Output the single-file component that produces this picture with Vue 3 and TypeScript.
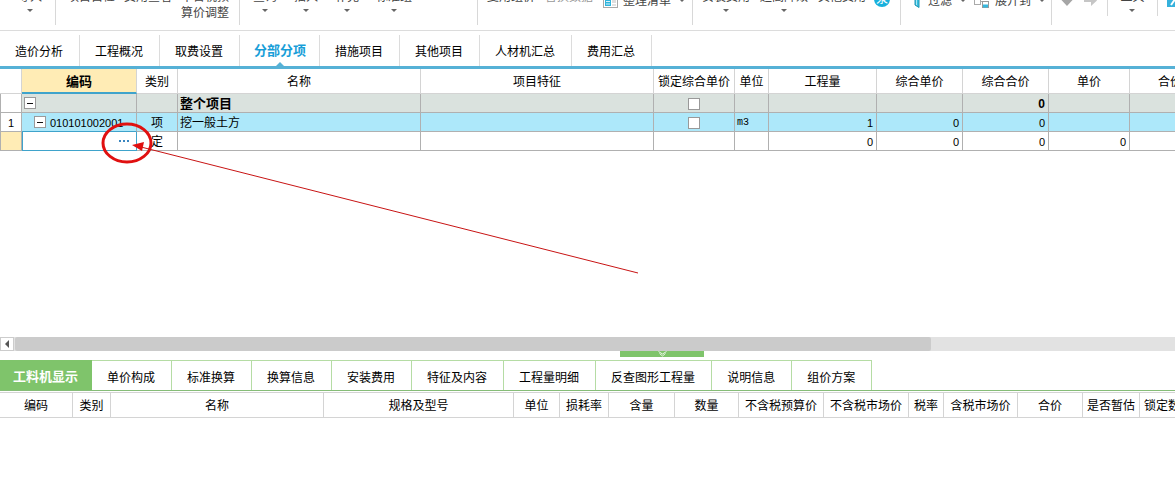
<script setup lang="ts">
import { ref } from 'vue'

interface Tool {
  label: string
  second?: string
  arrow?: boolean
  dim?: boolean
}

interface Row {
  index: string
  kind: 'total' | 'item' | 'quota'
  code: string
  type: string
  name: string
  lock: boolean
  unit: string
  quantity: string
  unitPrice: string
  totalPrice: string
  price: string
}

const checkTools: Tool[] = [
  { label: '项目自检' },
  { label: '费用查看' },
  { label: '不含税预', second: '算价调整' },
]
const editTools: Tool[] = [
  { label: '查询', arrow: true },
  { label: '插入', arrow: true },
  { label: '补充', arrow: true },
  { label: '标准组', arrow: true },
]
const reuseTools: Tool[] = [{ label: '复用组价' }, { label: '替换数据', dim: true }]
const priceTools: Tool[] = [
  { label: '安装费用', arrow: true },
  { label: '超高降效', arrow: true },
  { label: '其他费用' },
]

const mainTabs = ['造价分析', '工程概况', '取费设置', '分部分项', '措施项目', '其他项目', '人材机汇总', '费用汇总']
const activeMain = ref('分部分项')

const detailTabs = [
  '工料机显示', '单价构成', '标准换算', '换算信息', '安装费用',
  '特征及内容', '工程量明细', '反查图形工程量', '说明信息', '组价方案',
]
const activeDetail = ref('工料机显示')

const columns = ['编码', '类别', '名称', '项目特征', '锁定综合单价', '单位', '工程量', '综合单价', '综合合价', '单价', '合价']
const detailColumns = [
  '编码', '类别', '名称', '规格及型号', '单位', '损耗率', '含量', '数量',
  '不含税预算价', '不含税市场价', '税率', '含税市场价', '合价', '是否暂估', '锁定数量',
]

const rows: Row[] = [
  { index: '', kind: 'total', code: '', type: '', name: '整个项目', lock: true, unit: '', quantity: '', unitPrice: '', totalPrice: '0', price: '' },
  { index: '1', kind: 'item', code: '010101002001', type: '项', name: '挖一般土方', lock: true, unit: 'm3', quantity: '1', unitPrice: '0', totalPrice: '0', price: '' },
  { index: '', kind: 'quota', code: '', type: '定', name: '', lock: false, unit: '', quantity: '0', unitPrice: '0', totalPrice: '0', price: '0' },
]
</script>

<template>
  <div class="app">
    <header class="ribbon">
      <div class="group g-import">
        <button class="tool"><span>导入</span><i class="caret"></i></button>
      </div>
      <div class="group g-check">
        <button v-for="t in checkTools" :key="t.label" class="tool">
          <span>{{ t.label }}</span><span v-if="t.second" class="second">{{ t.second }}</span>
        </button>
      </div>
      <div class="group g-edit">
        <button v-for="t in editTools" :key="t.label" class="tool">
          <span>{{ t.label }}</span><i v-if="t.arrow" class="caret"></i>
        </button>
      </div>
      <div class="group g-reuse">
        <button v-for="t in reuseTools" :key="t.label" class="tool" :class="{ dim: t.dim }"><span>{{ t.label }}</span></button>
        <button class="tool-row">
          <svg width="15" height="14" viewBox="0 0 15 14">
            <rect x="0.5" y="0.5" width="14" height="13" fill="#fff" stroke="#a9a9a9" />
            <rect x="2" y="2" width="6" height="10" fill="#2fb4dc" />
            <path d="M3 7.5h4M3 10h4" stroke="#d9f2fa" />
            <rect x="9" y="2" width="4" height="7" fill="#dedede" />
            <path d="M9 11h4" stroke="#c4c4c4" />
          </svg>
          <span>整理清单</span><i class="caret"></i>
        </button>
      </div>
      <div class="group g-price">
        <button v-for="t in priceTools" :key="t.label" class="tool">
          <span>{{ t.label }}</span><i v-if="t.arrow" class="caret"></i>
        </button>
        <span class="badge">泵</span>
      </div>
      <div class="group g-filter">
        <button class="tool-row">
          <svg width="12" height="14" viewBox="0 0 12 14">
            <path d="M0.5 0.5h11L8 5v8.5L4 11V5z" fill="#35bfe0" stroke="#2295b5" />
            <path d="M5.5 5v6" stroke="#a8e8f6" />
          </svg>
          <span>过滤</span><i class="caret"></i>
        </button>
        <button class="tool-row">
          <svg width="16" height="14" viewBox="0 0 16 14">
            <rect x="0.5" y="4.5" width="6" height="6" fill="#fff" stroke="#aaa" />
            <path d="M6 7.5h3" stroke="#aaa" />
            <rect x="8.5" y="0.5" width="6" height="5" fill="#fff" stroke="#999" />
            <rect x="8.5" y="7.5" width="6" height="6" fill="#fff" stroke="#999" />
            <path d="M9 10.5h5v3H9z" fill="#35b8de" />
          </svg>
          <span>展开到</span><i class="caret"></i>
        </button>
      </div>
      <div class="group short g-move">
        <button class="icon-button" aria-label="下移">
          <svg width="14" height="12" viewBox="0 0 14 12"><path d="M4 0h6v5h3.5L7 12 0.5 5H4z" fill="#a6a6a6" /></svg>
        </button>
        <button class="icon-button" aria-label="右移">
          <svg width="14" height="12" viewBox="0 0 14 12"><path d="M0 5h7V0l6 6.5L7 12V8H0z" fill="#c6c6c6" /></svg>
        </button>
      </div>
      <div class="group short g-tool">
        <button class="tool"><span>工具</span><i class="caret"></i></button>
      </div>
      <div class="group g-last">
        <svg width="16" height="14" viewBox="0 0 16 14"><rect width="16" height="14" fill="#35b1dc" /><path d="M4 12l5-7" stroke="#fff" stroke-width="2" /></svg>
      </div>
    </header>

    <nav class="main-tabs">
      <button v-for="t in mainTabs" :key="t" :class="{ active: t === activeMain }" @click="activeMain = t">{{ t }}</button>
    </nav>

    <main class="pane">
      <table class="grid">
        <colgroup>
          <col class="w22" /><col class="w115" /><col class="w41" /><col class="w243" /><col class="w233" /><col class="w81" />
          <col class="w34" /><col class="w108" /><col class="w86" /><col class="w86" /><col class="w81" /><col class="w81" />
        </colgroup>
        <thead>
          <tr>
            <th></th>
            <th v-for="(c, i) in columns" :key="c" :class="{ current: i === 0 }">{{ c }}</th>
          </tr>
        </thead>
        <tbody>
          <tr v-for="(r, i) in rows" :key="i" :class="r.kind">
            <td class="index">{{ r.index }}</td>
            <td class="code">
              <div v-if="r.kind !== 'quota'" class="node">
                <button class="toggle" aria-label="折叠"></button><span>{{ r.code }}</span>
              </div>
              <button v-else class="more" aria-label="选择编码"><i></i><i></i><i></i></button>
            </td>
            <td class="center">{{ r.type }}</td>
            <td class="name">{{ r.name }}</td>
            <td></td>
            <td class="center"><input v-if="r.lock" type="checkbox" :aria-label="'锁定综合单价 ' + r.name" /></td>
            <td class="unit">{{ r.unit }}</td>
            <td class="num">{{ r.quantity }}</td>
            <td class="num">{{ r.unitPrice }}</td>
            <td class="num">{{ r.totalPrice }}</td>
            <td class="num">{{ r.price }}</td>
            <td></td>
          </tr>
        </tbody>
      </table>
      <svg class="annotation" width="660" height="230" viewBox="0 0 660 230">
        <ellipse cx="127" cy="74" rx="24" ry="19" fill="none" stroke="#e01010" stroke-width="3" />
        <path d="M141 78L638 204" stroke="#c81414" stroke-width="1" />
        <path d="M132 76L144 73L142 82z" fill="#e01010" />
      </svg>
    </main>

    <div class="scrollbar">
      <button class="scroll-left" aria-label="向左滚动"></button>
      <div class="track"><div class="thumb"></div></div>
    </div>

    <section class="detail">
      <button class="splitter" aria-label="收起">
        <svg width="11" height="6" viewBox="0 0 11 6" fill="none" stroke="#e9f6e4"><path d="M1.5 0.5L5.5 3L9.5 0.5M2.5 2.5L5.5 5L8.5 2.5" /></svg>
      </button>
      <nav class="detail-tabs">
        <button v-for="t in detailTabs" :key="t" :class="{ active: t === activeDetail }" @click="activeDetail = t">{{ t }}</button>
      </nav>
      <table class="grid detail-grid">
        <colgroup>
          <col class="w73" /><col class="w38" /><col class="w213" /><col class="w190" /><col class="w46" /><col class="w49" />
          <col class="w66" /><col class="w64" /><col class="w85" /><col class="w85" /><col class="w35" /><col class="w74" />
          <col class="w65" /><col class="w57" /><col class="w57" />
        </colgroup>
        <thead>
          <tr><th v-for="c in detailColumns" :key="c">{{ c }}</th></tr>
        </thead>
      </table>
    </section>
  </div>
</template>

<style>
body {
  margin: 0;
  background: #fff;
}
</style>

<style scoped>
.app {
  display: flex;
  flex-direction: column;
  min-height: 100vh;
  overflow: hidden;
  font-family: "Liberation Sans", "Noto Sans CJK SC", sans-serif;
  font-size: 12px;
  line-height: 16px;
  color: #000;
}
button {
  margin: 0;
  padding: 0;
  border: 0;
  background: none;
  font: inherit;
  color: inherit;
  white-space: nowrap;
}

.ribbon {
  display: flex;
  align-items: flex-start;
  height: 30px;
  overflow: hidden;
  border-bottom: 1px solid #dcdcdc;
  color: #444;
}
.group {
  display: flex;
  flex: none;
  box-sizing: border-box;
  height: 25px;
  border-right: 1px solid #d8d8d8;
}
.group.short { height: 16px; }
.g-import { width: 56px; padding-left: 18px; }
.g-check { width: 184px; padding-left: 11px; gap: 9px; }
.g-edit { width: 238px; padding-left: 13px; gap: 17px; }
.g-reuse { width: 215px; padding-left: 9px; gap: 10px; }
.g-price { width: 208px; padding-left: 9px; gap: 10px; }
.g-filter { width: 151px; padding-left: 10px; gap: 8px; }
.g-move { width: 56px; padding-left: 8px; gap: 10px; }
.g-tool { width: 50px; justify-content: center; }
.g-last { flex: 1 0 auto; padding-left: 9px; border-right: 0; }
.g-last svg { margin-top: -7px; }
.tool {
  display: flex;
  flex-direction: column;
  align-items: center;
  align-self: flex-start;
  margin-top: -11px;
}
.tool .caret { margin-top: 4px; }
.tool.dim { color: #999; }
.caret {
  width: 0;
  height: 0;
  border: 3px solid transparent;
  border-top-color: #666;
  border-bottom: 0;
}
.tool-row {
  display: flex;
  align-items: center;
  align-self: flex-start;
  gap: 5px;
  margin-top: -7px;
}
.tool-row .caret {
  align-self: flex-start;
  margin-top: 6px;
  margin-left: 3px;
}
.badge {
  width: 16px;
  height: 16px;
  margin-top: -9px;
  margin-left: -2px;
  border-radius: 50%;
  background: #18b0dc;
  color: #fff;
  text-align: center;
}
.icon-button {
  display: flex;
  align-self: flex-start;
  margin-top: -6px;
}

.main-tabs {
  display: flex;
  height: 31px;
  padding-top: 4px;
  border-bottom: 3px solid #56b1d6;
}
.main-tabs button {
  position: relative;
  padding: 2px 16px 0 15px;
  border-right: 1px solid #dcdcdc;
}
.main-tabs .active {
  padding: 0 13px 0 14px;
  font-size: 13px;
  font-weight: bold;
  color: #189ed8;
}
.main-tabs .active::after {
  content: "";
  position: absolute;
  left: 50%;
  bottom: 0;
  margin-left: -4px;
  border: 4px solid transparent;
  border-top: 0;
  border-bottom-color: #56b1d6;
}

.pane {
  position: relative;
  flex: 1;
  overflow: hidden;
}
.grid {
  width: 0;
  table-layout: fixed;
  border-collapse: separate;
  border-spacing: 0;
}
.grid th,
.grid td {
  box-sizing: border-box;
  padding: 0;
  border-right: 1px solid #b0b0b0;
  border-bottom: 1px solid #b0b0b0;
  font-weight: normal;
  white-space: nowrap;
}
.grid th {
  height: 25px;
  padding-top: 2px;
  border-color: #d4d4d4;
}
.grid td {
  height: 19px;
  padding-top: 2px;
  line-height: 16px;
}
.grid th.current {
  border-bottom: 2px solid #3fa3cb;
  background: #ffecb5;
  font-size: 13px;
  font-weight: bold;
}
.total td { background: #dae2de; font-weight: bold; }
.item td { background: #ade8fa; }
.grid .index {
  border-left: 1px solid #b0b0b0;
  background: #fff;
  text-align: center;
  font-size: 11px;
}
.quota .index { background: #ffecb5; }
.center { text-align: center; }
.grid .name { padding-left: 2px; }
.total .name { font-size: 13px; }
.grid .unit {
  padding-left: 2px;
  font-family: "Liberation Mono", monospace;
  font-size: 10px;
}
.grid .num {
  padding-right: 3px;
  text-align: right;
  font-size: 11px;
}
.grid .total .num { font-size: 12px; }
.grid .code { padding-top: 0; }
.node {
  display: flex;
  align-items: center;
  gap: 4px;
  height: 18px;
  padding-left: 2px;
  font-size: 11px;
}
.node span { padding-top: 2px; }
.item .node { padding-left: 12px; }
.item .code,
.quota .code { border-color: #3fa3cb; }
.item .code { border-right-color: #b0b0b0; }
.quota .code { border-left: 1px solid #3fa3cb; }
.toggle {
  display: flex;
  align-items: center;
  box-sizing: border-box;
  width: 12px;
  height: 12px;
  border: 1px solid #9a9a9a;
  background: #fff;
}
.toggle::before {
  content: "";
  width: 6px;
  height: 1px;
  margin-left: 2px;
  background: #111;
}
.more {
  display: flex;
  gap: 2px;
  margin-left: auto;
  margin-right: 7px;
}
.more i {
  width: 2px;
  height: 2px;
  background: #3a86c0;
}
input {
  display: block;
  appearance: none;
  box-sizing: border-box;
  width: 12px;
  height: 12px;
  margin: 0 auto 1px;
  border: 1px solid #999;
  background: #fff;
}
.annotation {
  position: absolute;
  left: 0;
  top: 0;
  pointer-events: none;
}

.scrollbar {
  display: flex;
  gap: 1px;
  height: 14px;
  background: #e2e2e2;
}
.scroll-left {
  display: flex;
  align-items: center;
  justify-content: center;
  box-sizing: border-box;
  width: 14px;
  border: 1px solid #ccc;
  background: #fff;
}
.scroll-left::before {
  content: "";
  border: 4px solid transparent;
  border-left: 0;
  border-right-color: #555;
}
.track { flex: 1; }
.thumb {
  width: 79%;
  height: 100%;
  border-radius: 2px;
  background: #cbcbcb;
}

.detail {
  height: 139px;
  overflow: hidden;
}
.splitter {
  display: flex;
  justify-content: center;
  width: 84px;
  height: 6px;
  margin-left: 620px;
  background: #7fc46b;
}
.detail-tabs {
  display: flex;
  height: 30px;
  margin-top: 3px;
  border-bottom: 1px solid #86bd78;
}
.detail-tabs button {
  padding: 4px 16px 0 15px;
  border-top: 1px solid #b5dca4;
  border-right: 1px solid #b5dca4;
}
.detail-tabs .active {
  padding: 3px 13px 0;
  border-color: #7fc46b;
  background: #7fc46b;
  color: #fff;
  font-size: 13px;
  font-weight: bold;
}
.detail-grid { margin-top: 1px; }
.detail-grid th {
  height: 26px;
  border-top: 1px solid #d4d4d4;
}

.w22 { width: 22px; }
.w34 { width: 34px; }
.w35 { width: 35px; }
.w38 { width: 38px; }
.w41 { width: 41px; }
.w46 { width: 46px; }
.w49 { width: 49px; }
.w57 { width: 57px; }
.w64 { width: 64px; }
.w65 { width: 65px; }
.w66 { width: 66px; }
.w73 { width: 73px; }
.w74 { width: 74px; }
.w81 { width: 81px; }
.w85 { width: 85px; }
.w86 { width: 86px; }
.w108 { width: 108px; }
.w115 { width: 115px; }
.w190 { width: 190px; }
.w213 { width: 213px; }
.w233 { width: 233px; }
.w243 { width: 243px; }
</style>
